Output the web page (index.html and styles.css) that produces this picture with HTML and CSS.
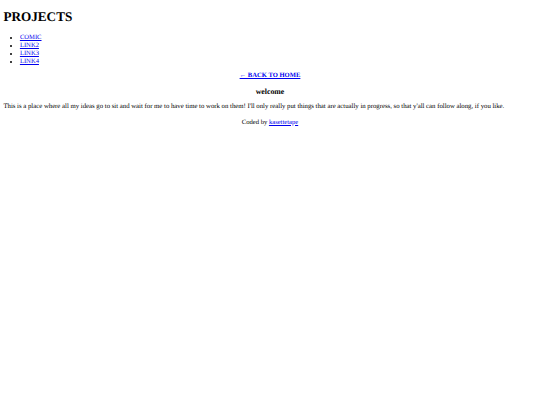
FILE: index.html
```html
<!DOCTYPE html>
<html>
<head>
<meta charset="utf-8">
<title>Projects</title>
<link rel="stylesheet" href="styles.css">
</head>
<body class="page">
<h1 class="title">PROJECTS</h1>
<ul class="nav">
<li><a href="#">COMIC</a></li>
<li><a href="#">LINK2</a></li>
<li><a href="#">LINK3</a></li>
<li><a href="#">LINK4</a></li>
</ul>
<p class="center"><a class="back" href="#">← BACK TO HOME</a></p>
<h3 class="welcome">welcome</h3>
<p class="text">This is a place where all my ideas go to sit and wait for me to have time to work on them! I'll only really put things that are actually in progress, so that y'all can follow along, if you like.</p>
<p class="center">Coded by <a href="#">kasettetape</a></p>
</body>
</html>
```
FILE: styles.css
```css
html { background: #fff; }
.page {
  margin: 3.4px;
  font-family: "Liberation Serif", "Times New Roman", serif;
  font-size: 6.6px;
  color: #000;
  text-rendering: geometricPrecision;
}
a { color: #0000ee; }
.title {
  font-size: 13.2px;
  margin: 5.5px 0 9.5px;
  font-weight: bold;
}
.nav {
  margin: 6.4px 0;
  padding-left: 16.5px;
  line-height: 7.7px;
}
.center {
  text-align: center;
  margin: 6.6px 0;
}
.back { font-weight: bold; }
.welcome {
  text-align: center;
  font-size: 7.8px;
  margin: 8.5px 0 6.5px;
}
.text {
  font-size: 6.75px;
  margin: 6.6px 0 9px;
}
```
